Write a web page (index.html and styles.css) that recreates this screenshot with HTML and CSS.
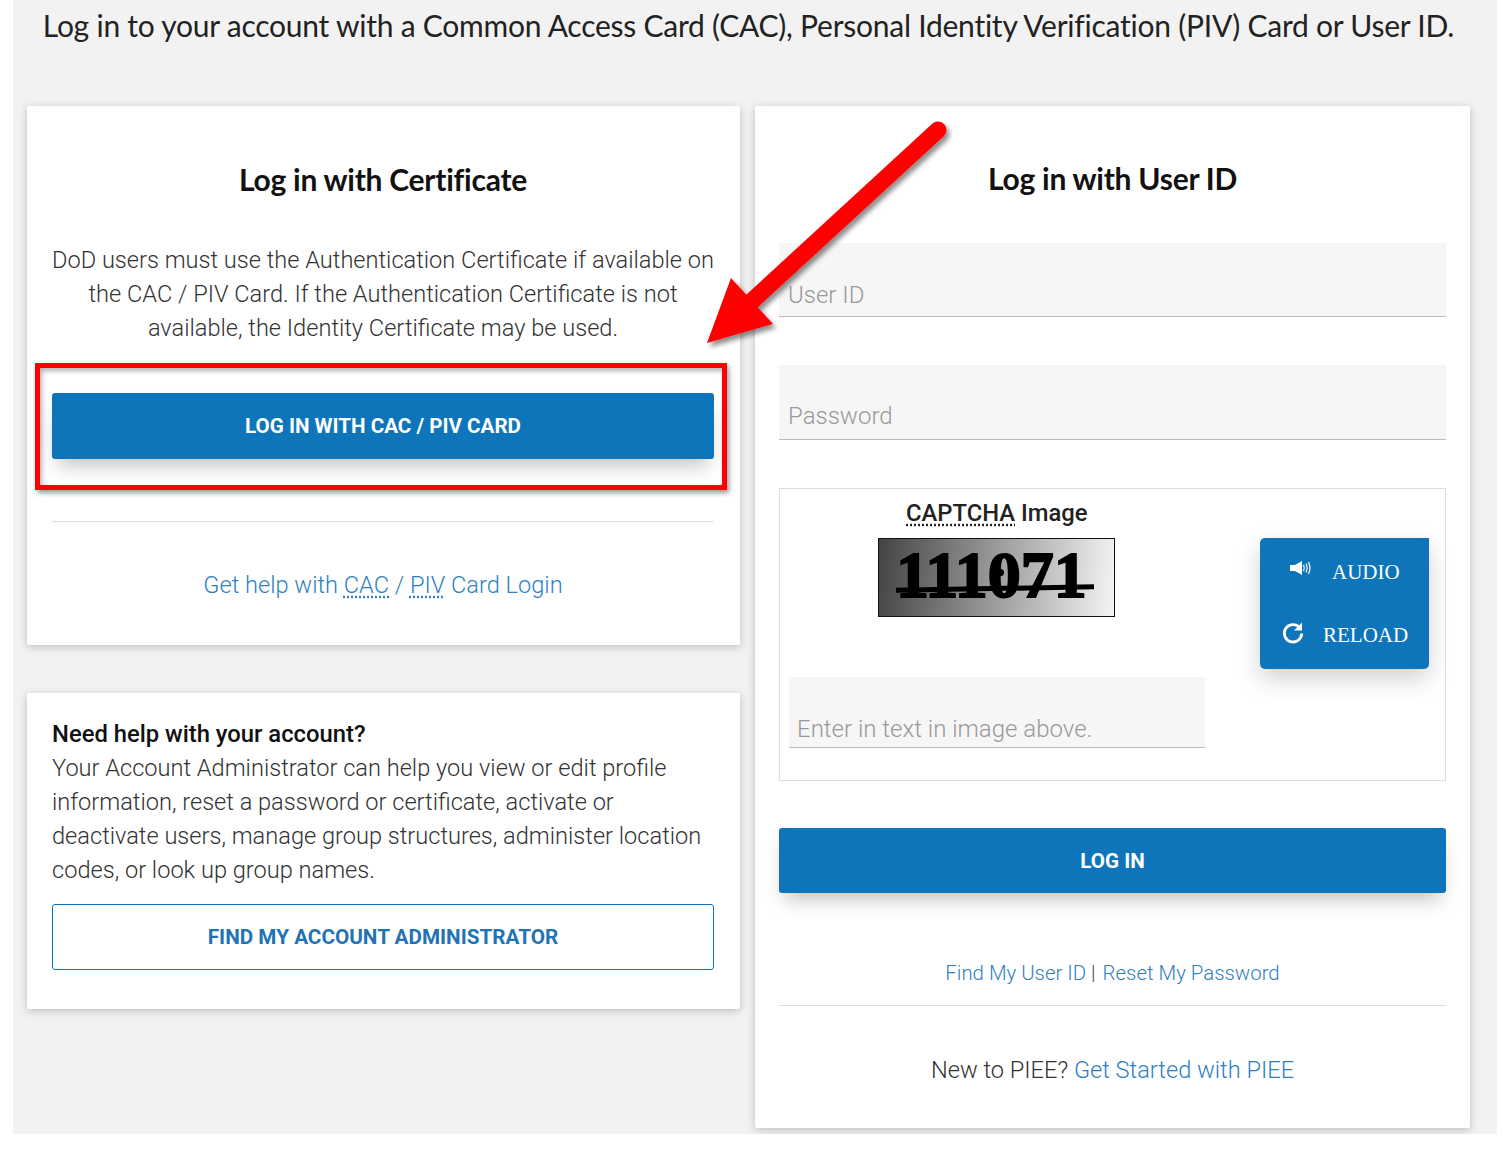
FILE: index.html
```html
<!DOCTYPE html>
<html lang="en">
<head>
<meta charset="UTF-8">
<meta name="viewport" content="width=device-width, initial-scale=1.0">
<title>PIEE Log In</title>
<link rel="stylesheet" href="styles.css">
</head>
<body>
<div class="panel">
  <h1 class="intro">Log in to your account with a Common Access Card (CAC), Personal Identity Verification (PIV) Card or User ID.</h1>

  <div class="columns">
    <div class="col-left">
      <div class="card cert-card">
        <h2 class="cert-title">Log in with Certificate</h2>
        <p class="cert-text">DoD users must use the Authentication Certificate if available on the CAC / PIV Card. If the Authentication Certificate is not available, the Identity Certificate may be used.</p>
        <a class="btn btn-cac">LOG IN WITH CAC / PIV CARD</a>
        <hr class="rule rule-cert">
        <p class="cert-help"><a>Get help with <abbr>CAC</abbr> / <abbr>PIV</abbr> Card Login</a></p>
      </div>

      <div class="card help-card">
        <h3 class="help-title">Need help with your account?</h3>
        <p class="help-text">Your Account Administrator can help you view or edit profile information, reset a password or certificate, activate or deactivate users, manage group structures, administer location codes, or look up group names.</p>
        <a class="btn-outline">FIND MY ACCOUNT ADMINISTRATOR</a>
      </div>
    </div>

    <div class="card user-card">
      <h2 class="user-title">Log in with User ID</h2>
      <div class="field field-user"><span>User ID</span></div>
      <div class="field field-pass"><span>Password</span></div>

      <div class="captcha">
        <div class="captcha-left">
          <div class="captcha-label"><abbr>CAPTCHA</abbr> Image</div>
          <div class="captcha-img">
            <span class="captcha-digits">111071</span>
            <span class="captcha-line"></span>
            <span class="captcha-dot"></span>
          </div>
          <div class="field field-captcha"><span>Enter in text in image above.</span></div>
        </div>
        <div class="captcha-btns">
          <div class="captcha-btn btn-audio">
            <svg class="icon-audio" width="22" height="18" viewBox="0 0 22 18"><path d="M1 6h5l7-4v14l-7-4H1z" fill="#fff"/><path d="M14.500 6c.8 1.800.8 4.200 0 6M17 4.500c1.300 2.800 1.300 6.200 0 9M19.500 3c1.800 3.800 1.800 8.200 0 12" fill="none" stroke="#fff" stroke-width="1.200"/></svg>
            <span>AUDIO</span>
          </div>
          <div class="captcha-btn btn-reload">
            <svg class="icon-reload" width="24" height="24" viewBox="0 0 24 24"><path d="M18.500 6.500A8.700 8.700 0 1 0 20.700 12.500" fill="none" stroke="#fff" stroke-width="2.800"/><path d="M21 1.500v8h-8z" fill="#fff"/></svg>
            <span>RELOAD</span>
          </div>
        </div>
      </div>

      <a class="btn btn-login">LOG IN</a>
      <p class="user-links"><a>Find My User ID</a> | <a class="link-reset">Reset My Password</a></p>
      <hr class="rule">
      <p class="user-new">New to PIEE? <a>Get Started with PIEE</a></p>
    </div>
  </div>

  <!-- annotations drawn on top of the screenshot -->
  <div class="red-box"></div>
  <svg class="arrow" width="270" height="250" viewBox="0 0 270 250">
    <defs>
      <filter id="arrowShadow" x="-10%" y="-10%" width="130%" height="130%">
        <feDropShadow dx="3" dy="4" stdDeviation="2.500" flood-color="#000" flood-opacity="0.450"/>
      </filter>
    </defs>
    <g filter="url(#arrowShadow)">
      <path d="M248 22 L62 193" stroke="#f00" stroke-width="17" stroke-linecap="round" fill="none"/>
      <path d="M41 170 L83 216 L17 235 Z" fill="#f00"/>
    </g>
  </svg>
</div>
</body>
</html>
```

FILE: styles.css
```css
* {
  box-sizing: border-box;
}

body {
  margin: 0;
  background-color: #fff;
  font-family: Roboto, Arial, sans-serif;
  color: #222;
}

.panel {
  position: relative;
  width: 1484px;
  height: 1134px;
  margin-left: 13px;
  padding: 0 27px 0 14px;
  background-color: #f2f2f2;
}

a {
  color: #2f7fc1;
  text-decoration: none;
}

abbr {
  text-decoration: underline dotted;
  text-underline-offset: 3px;
}

p, h1, h2, h3 {
  margin: 0;
}

.intro {
  height: 106px;
  padding-top: 7px;
  font-family: Lato, sans-serif;
  font-size: 30px;
  font-weight: 400;
  line-height: 36px;
  letter-spacing: -0.24px;
  text-align: center;
  white-space: nowrap;
  color: #222;
}

.columns {
  display: grid;
  grid-template-columns: 713px 715px;
  column-gap: 15px;
  align-items: start;
}

.card {
  background-color: #fff;
  border-radius: 2px;
  box-shadow: 0 2px 8px rgba(0, 0, 0, 0.22);
}

.col-left {
  display: flex;
  flex-direction: column;
  gap: 48px;
}

.cert-card {
  height: 539px;
  padding: 55px 26px 0 25px;
  text-align: center;
}

.cert-title, .user-title {
  font-family: Lato, sans-serif;
  font-size: 30px;
  font-weight: 700;
  line-height: 36px;
  letter-spacing: -0.25px;
  color: #111;
  text-align: center;
}

.cert-text {
  margin: 46px -3px 0;
  font-size: 23.600px;
  font-weight: 300;
  line-height: 34px;
  color: #333;
}

.btn {
  display: flex;
  align-items: center;
  justify-content: center;
  background-color: #0e75bb;
  color: #fff;
  font-size: 20.600px;
  font-weight: 700;
  border-radius: 3px;
  box-shadow: 0 12px 20px -6px rgba(0, 0, 0, 0.25);
}

.btn-cac {
  height: 66px;
  margin-top: 48px;
}

.rule {
  height: 1px;
  margin: 0;
  border: 0;
  background-color: #ddd;
}

.rule-cert {
  margin-top: 62px;
}

.cert-help {
  margin-top: 46px;
  font-size: 23.600px;
  font-weight: 300;
  line-height: 34px;
}

.help-card {
  height: 316px;
  padding: 24px 26px 0 25px;
}

.help-title {
  font-size: 23.800px;
  font-weight: 500;
  line-height: 34px;
  color: #111;
}

.help-text {
  font-size: 23.600px;
  font-weight: 300;
  line-height: 34px;
  color: #333;
}

.btn-outline {
  display: flex;
  align-items: center;
  justify-content: center;
  height: 66px;
  margin-top: 17px;
  border: 1.500px solid #0e75bb;
  border-radius: 3px;
  font-size: 20.700px;
  font-weight: 700;
  color: #2273b5;
}

.user-card {
  height: 1022px;
  padding: 54px 24px 0;
}

.field {
  display: flex;
  align-items: flex-end;
  background-color: #f6f6f6;
  border-bottom: 1.500px solid #bbb;
  font-size: 24px;
  font-weight: 300;
  color: #999;
  padding: 0 9px 7px;
}

.field-user {
  height: 74px;
  margin-top: 47px;
}

.field-pass {
  height: 75px;
  margin-top: 48px;
  padding-bottom: 9px;
}

.captcha {
  display: flex;
  justify-content: space-between;
  height: 293px;
  margin-top: 48px;
  padding: 8px 16px 0 9px;
  border: 1px solid #ddd;
}

.captcha-left {
  width: 416px;
}

.captcha-label {
  font-size: 23.800px;
  font-weight: 500;
  line-height: 32px;
  padding-left: 117px;
  color: #222;
}

.captcha-img {
  position: relative;
  width: 237px;
  height: 79px;
  margin: 9px 0 0 89px;
  border: 1.500px solid #111;
  background: linear-gradient(95deg, #444, #f4f4f4);
}

.captcha-digits {
  display: block;
  padding-left: 17px;
  font-family: "Liberation Serif", serif;
  font-size: 66px;
  font-weight: 700;
  line-height: 72px;
  color: #000;
  -webkit-text-stroke: 2px #000;
}

.captcha-line {
  position: absolute;
  left: 17px;
  top: 47px;
  width: 198px;
  height: 5px;
  background-color: #000;
  transform: rotate(-1deg);
}

.captcha-dot {
  position: absolute;
  left: 118px;
  top: 30px;
  width: 7px;
  height: 7px;
  border-radius: 50%;
  background-color: #000;
}

.field-captcha {
  height: 71px;
  margin-top: 60px;
  padding: 0 8px 4px;
}

.captcha-btns {
  width: 169px;
  height: 131px;
  margin-top: 41px;
  background-color: #0e75bb;
  border-radius: 5px 0 5px 5px;
  box-shadow: 0 10px 24px rgba(0, 0, 0, 0.18);
  color: #fff;
  font-family: "Liberation Serif", serif;
  font-size: 21px;
}

.captcha-btn {
  display: flex;
  align-items: center;
}

.btn-audio {
  height: 64px;
  padding: 4px 0 0 29px;
  gap: 21px;
}

.icon-audio {
  margin-top: -8px;
}

.btn-reload {
  height: 66px;
  padding: 0 0 0 21px;
  gap: 18px;
}

.icon-reload {
  margin-top: -5px;
}

.btn-login {
  height: 65px;
  margin-top: 47px;
}

.user-links {
  margin-top: 63px;
  font-size: 20.400px;
  font-weight: 300;
  line-height: 34px;
  text-align: center;
  color: #444;
}

.link-reset {
  margin-left: 2px;
}

.user-links + .rule {
  margin-top: 15px;
}

.user-new {
  margin-top: 47px;
  font-size: 23.600px;
  font-weight: 300;
  line-height: 34px;
  text-align: center;
  color: #333;
}

.red-box {
  position: absolute;
  left: 22px;
  top: 363px;
  width: 692px;
  height: 127px;
  border: 5px solid #f00;
  box-shadow: 2px 3px 5px rgba(0, 0, 0, 0.4), inset 2px 3px 5px rgba(0, 0, 0, 0.3);
}

.arrow {
  position: absolute;
  left: 677px;
  top: 108px;
}
```
